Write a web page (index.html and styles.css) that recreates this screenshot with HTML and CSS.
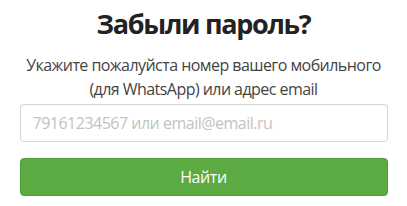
FILE: index.html
```html
<!DOCTYPE html>
<html lang="ru">
<head>
<meta charset="utf-8">
<link rel="stylesheet" href="styles.css">
</head>
<body>
<main class="recover">
  <h1 class="recover__title">Забыли пароль?</h1>
  <p class="recover__text">Укажите пожалуйста номер вашего мобильного (для WhatsApp) или адрес email</p>
  <form class="recover__form">
    <input class="recover__input" type="text" placeholder="79161234567 или email@email.ru">
    <button class="recover__btn" type="button">Найти</button>
  </form>
</main>
</body>
</html>
```

FILE: styles.css
```css
html, body {
  margin: 0;
  padding: 0;
  background: #fff;
}
body {
  font-family: "Open Sans", "Noto Sans", sans-serif;
  color: #222;
}
.recover {
  width: 368px;
  margin: 0 auto;
  padding-top: 7px;
  text-align: center;
}
.recover__title {
  margin: 0;
  font-size: 27px;
  line-height: 34px;
  font-weight: 700;
  letter-spacing: -1.3px;
  color: #222;
}
.recover__text {
  margin: 12px 0 0;
  font-size: 16px;
  line-height: 24px;
  letter-spacing: -0.55px;
  color: #444;
}
.recover__form {
  margin-top: 3px;
  display: flex;
  flex-direction: column;
  gap: 16px;
}
.recover__input {
  box-sizing: border-box;
  height: 38px;
  width: 100%;
  border: 1px solid #d4d4d4;
  border-radius: 4px;
  padding: 0 12px;
  font-family: inherit;
  font-size: 16px;
  letter-spacing: -0.5px;
  color: #333;
  outline: none;
}
.recover__input::placeholder {
  color: #c2c2c2;
}
.recover__btn {
  box-sizing: border-box;
  height: 38px;
  width: 100%;
  border: 1px solid #4e9c3a;
  border-radius: 4px;
  background: #5caa42;
  color: #fff;
  font-family: inherit;
  font-size: 16px;
  letter-spacing: -0.4px;
  cursor: pointer;
}
```
